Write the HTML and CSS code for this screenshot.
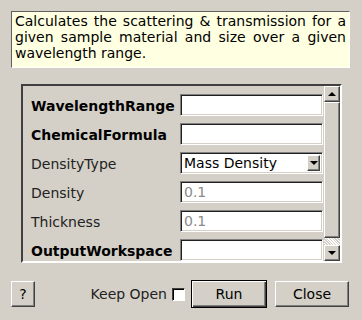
FILE: index.html
```html
<!DOCTYPE html>
<html lang="en">
<head>
    <meta charset="UTF-8">
    <title>Algorithm Dialog</title>
    <link rel="stylesheet" href="styles.css">
</head>
<body>
    <div class="dialog">
        <div class="description">
            Calculates the scattering &amp; transmission for a given sample material and size over a given wavelength range.
        </div>

        <!-- property list with scrollbar -->
        <div class="panel">
            <div class="rows">
                <div class="row">
                    <span class="label required">WavelengthRange</span>
                    <div class="field"></div>
                </div>
                <div class="row">
                    <span class="label required">ChemicalFormula</span>
                    <div class="field"></div>
                </div>
                <div class="row">
                    <span class="label">DensityType</span>
                    <div class="combo">
                        <span class="combo-text">Mass Density</span>
                        <span class="combo-button"><span class="arrow-down"></span></span>
                    </div>
                </div>
                <div class="row">
                    <span class="label">Density</span>
                    <div class="field placeholder">0.1</div>
                </div>
                <div class="row">
                    <span class="label">Thickness</span>
                    <div class="field placeholder">0.1</div>
                </div>
                <div class="row">
                    <span class="label required">OutputWorkspace</span>
                    <div class="field"></div>
                </div>
            </div>
            <div class="scrollbar">
                <div class="scroll-button"><span class="arrow-up"></span></div>
                <div class="scroll-thumb"></div>
                <div class="scroll-track"></div>
                <div class="scroll-button"><span class="arrow-down"></span></div>
            </div>
        </div>

        <div class="buttons">
            <button class="btn help-btn">?</button>
            <div class="spacer"></div>
            <label class="keep-open">Keep Open <span class="checkbox"></span></label>
            <button class="btn default-btn">Run</button>
            <button class="btn close-btn">Close</button>
        </div>
    </div>
</body>
</html>
```

FILE: styles.css
```css
body {
    margin: 0;
    background-color: #d4d0c8;
    font-family: 'DejaVu Sans', sans-serif;
    font-size: 14px;
    color: #000;
}
.dialog {
    display: flex;
    flex-direction: column;
    width: 362px;
    height: 320px;
}
.description {
    margin: 11px 12px 0 11px;
    height: 54px;
    padding: 1px 3px 0 3px;
    border: 1px solid #606060;
    border-right-color: #ffffff;
    border-bottom-color: #ffffff;
    background-color: #ffffe1;
    line-height: 16px;
    text-align: justify;
}
/* sunken frame around the properties */
.panel {
    display: flex;
    margin: 16px 0 0 21px;
    width: 317px;
    height: 175px;
    border: 2px solid;
    border-color: #404040 #ffffff #ffffff #404040;
}
.rows {
    flex: 1;
    overflow: hidden;
    padding: 8px 1px 0 8px;
}
.row {
    display: flex;
    align-items: center;
    height: 22px;
    margin-bottom: 7px;
}
.label {
    width: 149px;
    color: #222;
    padding-top: 1px;
}
.label.required {
    font-weight: bold;
    color: #000;
}
.field, .combo {
    flex: 1;
    height: 22px;
    box-sizing: border-box;
    background-color: #fff;
    border: 1px solid;
    border-color: #808080 #ffffff #ffffff #808080;
    box-shadow: inset 1px 1px #202020, inset -1px -1px #d4d0c8;
    padding: 1px 4px 0 3px;
    line-height: 18px;
}
.placeholder {
    color: #8a8a8a;
}
.combo {
    display: flex;
    align-items: center;
    padding: 0 2px 0 3px;
}
.combo-text {
    flex: 1;
}
.combo-button {
    display: flex;
    align-items: center;
    justify-content: center;
    width: 13px;
    height: 16px;
    box-sizing: border-box;
    background-color: #d4d0c8;
    border: 1px solid;
    border-color: #ffffff #404040 #404040 #ffffff;
    box-shadow: inset -1px -1px #808080;
}
.arrow-down {
    width: 0;
    height: 0;
    border-left: 4px solid transparent;
    border-right: 4px solid transparent;
    border-top: 4px solid #000;
}
.arrow-up {
    width: 0;
    height: 0;
    border-left: 4px solid transparent;
    border-right: 4px solid transparent;
    border-bottom: 4px solid #000;
}
.scrollbar {
    display: flex;
    flex-direction: column;
    width: 16px;
}
.scroll-button {
    display: flex;
    align-items: center;
    justify-content: center;
    height: 16px;
    box-sizing: border-box;
    background-color: #d4d0c8;
    border: 1px solid;
    border-color: #ffffff #404040 #404040 #ffffff;
    box-shadow: inset -1px -1px #808080;
}
.scroll-thumb {
    flex: 1;
    box-sizing: border-box;
    background-color: #d4d0c8;
    border: 1px solid;
    border-color: #ffffff #404040 #404040 #ffffff;
    box-shadow: inset -1px -1px #808080;
}
.scroll-track {
    height: 7px;
    background-image: repeating-linear-gradient(45deg, #d4d0c8 0 1px, #ffffff 1px 2px);
}
.buttons {
    display: flex;
    align-items: center;
    margin-top: 17px;
    padding: 0 13px 0 11px;
}
.spacer {
    flex: 1;
}
.btn {
    font-family: 'DejaVu Sans', sans-serif;
    font-size: 14px;
    color: #000;
    background-color: #d4d0c8;
    border: 1px solid;
    border-color: #ffffff #404040 #404040 #ffffff;
    box-shadow: inset -1px -1px #808080;
    padding: 0;
    height: 26px;
}
.help-btn {
    width: 24px;
}
.keep-open {
    display: flex;
    align-items: center;
    gap: 5px;
    margin-right: 6px;
    color: #222;
}
.checkbox {
    width: 13px;
    height: 13px;
    box-sizing: border-box;
    background-color: #fff;
    border: 1px solid;
    border-color: #404040 #ffffff #ffffff #404040;
    box-shadow: inset 1px 1px #000;
}
.default-btn {
    width: 76px;
    height: 28px;
    margin-right: 8px;
    border: 1px solid #000;
    box-shadow: inset 1px 1px #ffffff, inset -1px -1px #404040, inset -2px -2px #808080;
}
.close-btn {
    width: 74px;
}
```
